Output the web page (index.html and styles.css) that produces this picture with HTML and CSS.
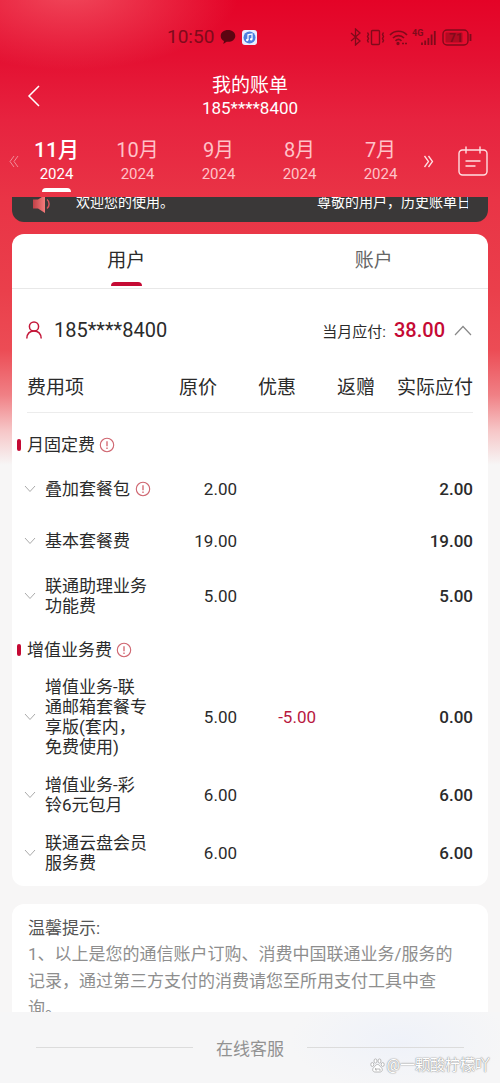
FILE: index.html
```html
<!DOCTYPE html>
<html lang="zh-CN">
<head>
<meta charset="utf-8">
<meta name="viewport" content="width=device-width, initial-scale=1">
<title>我的账单</title>
<link rel="stylesheet" href="styles.css">
</head>
<body>
<svg class="defs" width="0" height="0" aria-hidden="true">
  <symbol id="down" viewBox="0 0 12 8"><path d="M1 1l5 5.500l5-5.500" fill="none" stroke="#aaa" stroke-width="1"/></symbol>
  <symbol id="info" viewBox="0 0 16 16"><circle cx="8" cy="8" r="6.700" fill="none" stroke="#cf6670" stroke-width="1.100"/><path d="M8 4.200v5M8 10.600v1.400" stroke="#cf5560" stroke-width="1.200"/></symbol>
</svg>
<div class="page">
  <div class="status">
    <div class="status-group">
      <span class="clock">10:50</span>
      <svg width="16" height="16" viewBox="0 0 16 16"><path d="M8 1C3.800 1 .700 3.500 .700 6.900c0 2.300 1.300 4.100 3.300 5.100l-.7 3 3.300-2.300c.5.100 1 .1 1.400.1 4.200 0 7.300-2.500 7.300-5.900S12.200 1 8 1z" fill="#5c0511"/></svg>
      <svg width="15" height="15" viewBox="0 0 15 15"><rect width="15" height="15" rx="3" fill="#e9f0ff"/><circle cx="7.500" cy="7.500" r="6" fill="#4d7fe0"/><path d="M6 10V4.800l4-.9V9" fill="none" stroke="#fff" stroke-width="1.200"/><circle cx="5.200" cy="10" r="1.200" fill="#fff"/><circle cx="9.200" cy="9.200" r="1.200" fill="#fff"/></svg>
    </div>
    <div class="status-group status-right">
      <svg width="12" height="18" viewBox="0 0 12 18" fill="none" stroke="#800a1b" stroke-width="1.300"><path d="M1 5l9 8-4.500 4V1L10 5l-9 8"/></svg>
      <svg width="19" height="17" viewBox="0 0 19 17" fill="none" stroke="#800a1b" stroke-width="1.400"><rect x="5.500" y="1.500" width="8" height="14" rx="1"/><path d="M1.500 3.500l1 2-1 2 1 2-1 2 1 2M17.500 3.500l-1 2 1 2-1 2 1 2-1 2"/></svg>
      <svg width="19" height="17" viewBox="0 0 19 17" fill="none" stroke="#800a1b" stroke-width="1.700"><path d="M1 6c4.500-5 12.500-5 17 0M4 9c3-3.200 8-3.200 11 0M6.500 11.800c1.800-1.700 4.200-1.700 6 0"/><circle cx="9" cy="14.500" r=".8" fill="#800a1b"/><path d="M13 14.500h5" stroke-dasharray="2 1"/></svg>
      <svg width="26" height="17" viewBox="0 0 26 17"><text x="0" y="7" class="net">4G</text><path d="M10 16v-2.500M13.200 16v-4.500M16.400 16V9M19.600 16V5.500M22.800 16V2" stroke="#800a1b" stroke-width="1.800"/></svg>
      <svg width="30" height="17" viewBox="0 0 30 17"><rect x="1" y="1" width="25" height="15" rx="4" fill="none" stroke="#800a1b" stroke-width="1.400"/><rect x="3.500" y="3.500" width="17" height="10" rx="1" fill="#b20a22"/><path d="M28.500 5v7" stroke="#800a1b" stroke-width="1.800"/><text x="7" y="13" class="level">71</text></svg>
    </div>
  </div>

  <header class="head">
    <button class="back" aria-label="返回"><svg width="14" height="24" viewBox="0 0 14 24"><path d="M12 2L2 12l10 10" fill="none" stroke="#fff" stroke-width="1.500"/></svg></button>
    <div class="head-title"><h1>我的账单</h1><p>185****8400</p></div>
  </header>

  <nav class="months" aria-label="月份">
    <button class="skip dim" aria-label="更早"><svg width="10" height="13" viewBox="0 0 10 13"><path d="M5 1L1 6.500l4 5.500M9 1L5 6.500l4 5.500" fill="none" stroke="#fff" stroke-width="1"/></svg></button>
    <div class="month-list">
      <button class="month current"><b>11月</b><span>2024</span></button>
      <button class="month"><b>10月</b><span>2024</span></button>
      <button class="month"><b>9月</b><span>2024</span></button>
      <button class="month"><b>8月</b><span>2024</span></button>
      <button class="month"><b>7月</b><span>2024</span></button>
    </div>
    <button class="skip" aria-label="更多"><svg width="11" height="13" viewBox="0 0 11 13"><path d="M1.500 1l4 5.500-4 5.500M5.500 1l4 5.500-4 5.500" fill="none" stroke="#ffdfe2" stroke-width="1.300"/></svg></button>
    <button class="calendar" aria-label="选择日期"><svg width="30" height="31" viewBox="0 0 30 31" fill="none" stroke="#ffdfe2" stroke-width="1.400"><rect x="1" y="4" width="28" height="25" rx="3.500"/><path d="M8 1v6M22 1v6M8 15h14M8 20h9" stroke-linecap="round"/></svg></button>
  </nav>

  <main class="content">
    <div class="notice">
      <svg width="20" height="20" viewBox="0 0 20 20"><defs><linearGradient id="horn"><stop offset="0" stop-color="#c04047"/><stop offset="1" stop-color="#f47b7b"/></linearGradient></defs><path d="M1 5.500h5L13 1v18l-7-4.500H1z" fill="url(#horn)"/><path d="M15 5.500c2.800 2 2.800 7 0 9" fill="none" stroke="#d9525a" stroke-width="1.500"/></svg>
      <div class="notice-text"><span>欢迎您的使用。</span><span>尊敬的用户，历史账单日</span></div>
    </div>

    <section class="card bill">
      <div class="tabs" role="tablist">
        <button class="tab selected" role="tab" aria-selected="true">用户</button>
        <button class="tab" role="tab" aria-selected="false">账户</button>
      </div>
      <div class="account">
        <svg width="16" height="18" viewBox="0 0 16 18" fill="none" stroke="#c4183a" stroke-width="1.500"><circle cx="8" cy="5.500" r="4.600"/><path d="M.8 17.500c.3-4.500 3-7.400 7.200-7.400s6.900 2.900 7.200 7.400"/></svg>
        <span class="account-no">185****8400</span>
        <span class="due">当月应付:</span>
        <strong class="total">38.00</strong>
        <button class="fold" aria-label="收起"><svg width="18" height="11" viewBox="0 0 18 11"><path d="M1 10l8-8.500L17 10" fill="none" stroke="#888" stroke-width="1.200"/></svg></button>
      </div>
      <table>
        <colgroup><col><col class="amount"><col class="amount"><col class="amount"><col class="payable"></colgroup>
        <thead><tr><th scope="col">费用项</th><th scope="col">原价</th><th scope="col">优惠</th><th scope="col">返赠</th><th scope="col">实际应付</th></tr></thead>
        <tbody>
          <tr class="group"><th colspan="5" scope="rowgroup"><div class="group-name">月固定费<svg width="16" height="16"><use href="#info"/></svg></div></th></tr>
          <tr><td><div class="item"><svg width="12" height="8"><use href="#down"/></svg><span>叠加套餐包</span><svg width="16" height="16"><use href="#info"/></svg></div></td><td>2.00</td><td></td><td></td><td>2.00</td></tr>
          <tr><td><div class="item"><svg width="12" height="8"><use href="#down"/></svg><span>基本套餐费</span></div></td><td>19.00</td><td></td><td></td><td>19.00</td></tr>
          <tr><td><div class="item"><svg width="12" height="8"><use href="#down"/></svg><span>联通助理业务功能费</span></div></td><td>5.00</td><td></td><td></td><td>5.00</td></tr>
        </tbody>
        <tbody>
          <tr class="group"><th colspan="5" scope="rowgroup"><div class="group-name">增值业务费<svg width="16" height="16"><use href="#info"/></svg></div></th></tr>
          <tr><td><div class="item"><svg width="12" height="8"><use href="#down"/></svg><span>增值业务-联通邮箱套餐专享版(套内，免费使用)</span></div></td><td>5.00</td><td class="minus">-5.00</td><td></td><td>0.00</td></tr>
          <tr><td><div class="item"><svg width="12" height="8"><use href="#down"/></svg><span>增值业务-彩铃6元包月</span></div></td><td>6.00</td><td></td><td></td><td>6.00</td></tr>
          <tr><td><div class="item"><svg width="12" height="8"><use href="#down"/></svg><span>联通云盘会员服务费</span></div></td><td>6.00</td><td></td><td></td><td>6.00</td></tr>
        </tbody>
      </table>
    </section>

    <section class="card tips">
      <h2>温馨提示:</h2>
      <p>1、以上是您的通信账户订购、消费中国联通业务/服务的记录，通过第三方支付的消费请您至所用支付工具中查询。</p>
    </section>
  </main>

  <footer class="foot">
    <button class="service">在线客服</button>
    <div class="mark">
      <svg width="15" height="15" viewBox="0 0 15 15" fill="#fff" stroke="#aaa" stroke-width=".8"><ellipse cx="2.300" cy="6.500" rx="1.500" ry="2"/><ellipse cx="5.500" cy="3" rx="1.500" ry="2.100"/><ellipse cx="9.500" cy="3" rx="1.500" ry="2.100"/><ellipse cx="12.700" cy="6.500" rx="1.500" ry="2"/><path d="M7.500 6.500c-2 0-2.500 2-4 3.300-1.600 1.600-.7 4.200 1.500 4.200h5c2.200 0 3.100-2.600 1.500-4.200-1.500-1.300-2-3.300-4-3.300z"/><path d="M5.500 10v2h1.500v-2M9 10v2h2" fill="none"/></svg>
      <span>@一颗酸柠檬吖</span>
    </div>
  </footer>
</div>
</body>
</html>
```
FILE: styles.css
```css
* { box-sizing: border-box; }

body {
  margin: 0;
  font-family: Roboto, "Noto Sans CJK SC", sans-serif;
  color: #2b2b2b;
  background: #f6f6f6;
}

h1, h2, p { margin: 0; font-weight: 400; }

button {
  padding: 0;
  border: 0;
  background: none;
  color: inherit;
  font: inherit;
}

svg { display: block; flex: none; }

.defs { position: absolute; }

.page {
  display: flex;
  flex-direction: column;
  height: 100vh;
  background:
    radial-gradient(ellipse 170px 80px at 70px -10px, rgba(255, 150, 150, .48), rgba(255, 150, 150, 0)),
    linear-gradient(#e40327 0, #e41132 60px, #e7233f 120px, #e93446 200px, #ea3f4b 290px, #ec4c55 350px, #f08085 395px, #f6c5c6 430px, #f7f6f6 465px) no-repeat;
}

.status {
  display: flex;
  justify-content: space-between;
  align-items: center;
  height: 74px;
  padding: 0 28px 0 167px;
  color: #800a1b;
}

.status-group { display: flex; align-items: center; gap: 6px; }
.status-right { gap: 4px; }
.clock { font-size: 19px; line-height: 24px; }
.net { font-size: 9px; font-weight: 700; fill: #800a1b; }
.level { font-size: 12px; font-weight: 700; fill: #800a1b; }

.head {
  display: grid;
  grid-template-columns: 60px 1fr 60px;
  align-items: center;
  color: #fff;
}

.back { justify-self: start; margin-left: 27px; }
.head-title { text-align: center; }
.head h1 { font-size: 19px; line-height: 24px; }
.head p { font-size: 17px; line-height: 20px; }

.months {
  display: flex;
  align-items: center;
  height: 79px;
  padding: 8px 12px 0 9px;
  color: #ffc2c8;
}

.dim { opacity: .45; }
.month-list { display: flex; flex: 1; align-self: stretch; margin: 0 2px 0 -3px; }

.month {
  display: flex;
  flex: 1;
  flex-direction: column;
  align-items: center;
  padding-top: 10px;
}

.month b { font-size: 20px; font-weight: 400; line-height: 28px; }
.month span { font-size: 15px; line-height: 20px; }
.month.current { color: #fff; }
.month.current b { font-size: 21px; font-weight: 500; }

.month.current::after {
  content: "";
  width: 29px;
  height: 4px;
  margin-top: 4px;
  border-radius: 4px 4px 0 0;
  background: #fff;
}

.calendar { margin-left: 24px; }

.content { flex: 1; min-height: 0; overflow: hidden; padding: 0 12px; }

.notice {
  display: flex;
  align-items: flex-end;
  height: 25px;
  padding: 0 20px 8px;
  overflow: hidden;
  border-radius: 0 0 12px 12px;
  background: #3a3838;
  color: #fff;
}

.notice-text {
  display: flex;
  flex: 1;
  gap: 143px;
  margin-left: 24px;
  overflow: hidden;
  font-size: 14px;
  line-height: 24px;
  white-space: nowrap;
}

.card { border-radius: 12px; background: #fff; }

.bill { margin-top: 12px; padding-bottom: 3px; }

.tabs {
  display: flex;
  justify-content: space-between;
  padding: 0 20%;
  border-bottom: 1px solid #e8e8e8;
}

.tab {
  display: flex;
  flex-direction: column;
  align-items: center;
  height: 54px;
  padding-top: 13px;
  color: #666;
  font-size: 19px;
  line-height: 28px;
}

.tab.selected { color: #2b2b2b; }

.tab.selected::after {
  content: "";
  width: 31px;
  height: 4px;
  margin-top: 7px;
  border-radius: 4px 4px 0 0;
  background: #c50a34;
}

.account {
  display: flex;
  align-items: center;
  height: 82px;
  padding: 0 16px 0 14px;
}

.account-no { margin-left: 12px; font-size: 20px; }
.due { margin-left: auto; font-size: 15px; }
.total { margin: 0 9px 0 8px; color: #c50a34; font-size: 20px; font-weight: 500; }

table {
  width: calc(100% - 20px);
  margin: 0 15px 0 5px;
  border-spacing: 0;
  table-layout: fixed;
}

.amount { width: 79px; }
.payable { width: 78px; }

th, td { padding: 0; font-weight: 400; text-align: right; }

thead th {
  height: 42px;
  padding: 3px 20px 11px 0;
  background: linear-gradient(#ececec, #ececec) 0 100% / 100% 1px no-repeat;
  font-size: 19px;
  line-height: 28px;
  white-space: nowrap;
}

thead th:first-child { padding-left: 10px; text-align: left; background-position-x: 10px; }
thead th:last-child { padding-right: 0; }

tbody:nth-of-type(1)::before { content: ""; display: block; height: 8px; }

td { height: 52px; padding: 8px 0 10px; font-size: 17px; line-height: 20px; }
td:last-child { font-weight: 500; }

.group th { height: 43px; padding-top: 4px; text-align: left; }

.group-name { display: flex; align-items: center; gap: 6px; font-size: 17px; line-height: 20px; }

.group-name::before {
  content: "";
  width: 4px;
  height: 12px;
  border-radius: 2px;
  background: #c50a34;
}

.group-name svg { margin-left: -2px; }

.item { display: flex; align-items: center; gap: 5px; padding-left: 7px; text-align: left; }
.item span { max-width: 104px; margin-left: 4px; }
.minus { color: #b8183f; }

.tips { margin-top: 18px; padding: 11px 24px 11px 16px; font-size: 17px; line-height: 27px; }
.tips h2 { color: #555; font-size: 17px; line-height: 26px; }
.tips p { color: #8e8e8e; }

.foot {
  position: relative;
  height: 71px;
  padding: 0 36px;
  background: radial-gradient(ellipse 110px 50px at 80% 40%, #eff2f9, rgba(245, 246, 247, 0)), #f6f6f7;
}

.service {
  display: flex;
  align-items: center;
  gap: 23px;
  width: 100%;
  height: 70px;
  color: #929292;
  font-size: 17px;
}

.service::before, .service::after { content: ""; flex: 1; height: 1px; background: #dcdcdc; }

.mark {
  position: absolute;
  right: 10px;
  bottom: 8px;
  display: flex;
  align-items: center;
  gap: 2px;
  color: #fff;
  font-size: 15px;
  line-height: 20px;
  text-shadow: 0 0 1px #999, 0 0 1px #999, 0 0 2px #bbb;
}
```
